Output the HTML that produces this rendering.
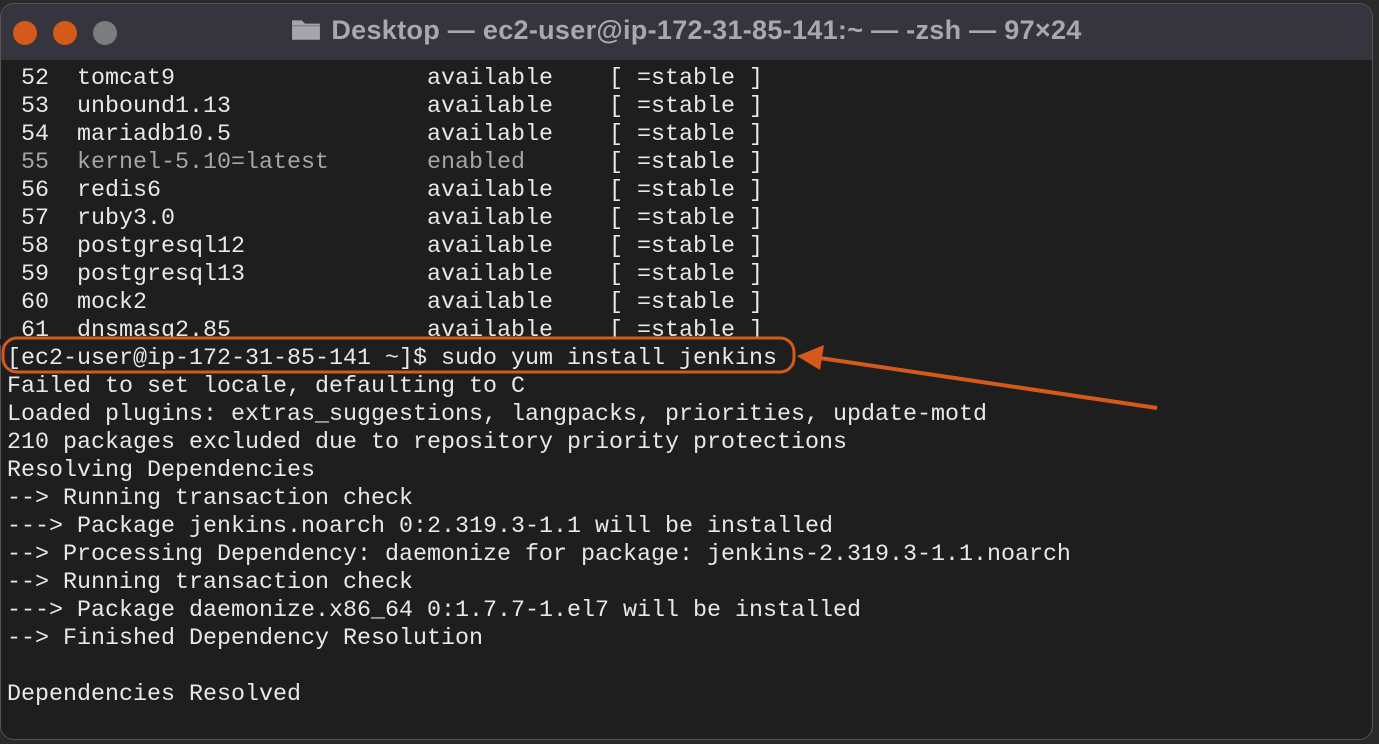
<!DOCTYPE html>
<html><head><style>
html,body{margin:0;padding:0;width:1379px;height:744px;overflow:hidden;background:#2a2a2a;}
.win{position:absolute;left:0;top:3px;width:1373px;height:737px;background:#1e1e1e;border-radius:14px;overflow:hidden;border:1px solid #555;box-sizing:border-box;}
.title{position:absolute;left:0;top:0;right:0;height:56px;background:#36343d;}
.dot{position:absolute;top:17px;width:24px;height:24px;border-radius:50%;}
.ttxt{position:absolute;left:0;right:0;top:11px;text-align:center;font:bold 27px "Liberation Sans",sans-serif;color:#a8a8ad;letter-spacing:0.3px;}
.term{position:absolute;left:7px;top:65px;margin:0;font:23.33px/28px "Liberation Mono",monospace;color:#e8e8e8;white-space:pre;}
.dim{color:#a6a6a6;}
</style></head><body>
<div class="win">
<div class="title">
<div class="dot" style="left:12px;background:#d35a1a"></div>
<div class="dot" style="left:52px;background:#d35a1a"></div>
<div class="dot" style="left:92px;background:#7a7d7d"></div>
<div class="ttxt"><svg width="30" height="24" viewBox="0 0 28 22" style="vertical-align:-2px;margin-right:10px"><path d="M1 3h9l3 3h14v15H1z" fill="#a5a5aa"/><path d="M1 8h26" stroke="#7c7c80" stroke-width="1"/></svg>Desktop — ec2-user@ip-172-31-85-141:~ — -zsh — 97×24</div>
</div>
</div>
<pre class="term"> 52  tomcat9                  available    [ =stable ]
 53  unbound1.13              available    [ =stable ]
 54  mariadb10.5              available    [ =stable ]
<span class="dim"> 55  kernel-5.10=latest       enabled</span>      [ =stable ]
 56  redis6                   available    [ =stable ]
 57  ruby3.0                  available    [ =stable ]
 58  postgresql12             available    [ =stable ]
 59  postgresql13             available    [ =stable ]
 60  mock2                    available    [ =stable ]
 61  dnsmasq2.85              available    [ =stable ]
[ec2-user@ip-172-31-85-141 ~]$ sudo yum install jenkins
Failed to set locale, defaulting to C
Loaded plugins: extras_suggestions, langpacks, priorities, update-motd
210 packages excluded due to repository priority protections
Resolving Dependencies
--> Running transaction check
---> Package jenkins.noarch 0:2.319.3-1.1 will be installed
--> Processing Dependency: daemonize for package: jenkins-2.319.3-1.1.noarch
--> Running transaction check
---> Package daemonize.x86_64 0:1.7.7-1.el7 will be installed
--> Finished Dependency Resolution

Dependencies Resolved</pre>
<div style="position:absolute;left:0;top:339px;width:1370px;height:6px;background:#1e1e1e"></div>
<svg width="1379" height="744" style="position:absolute;left:0;top:0">
<rect x="3" y="338" width="791" height="34" rx="14" fill="none" stroke="#d35a1a" stroke-width="3"/>
<line x1="1157" y1="408" x2="820" y2="358" stroke="#d35a1a" stroke-width="4"/>
<polygon points="797,356 824,345 820,370" fill="#d35a1a"/>
</svg>
</body></html>
